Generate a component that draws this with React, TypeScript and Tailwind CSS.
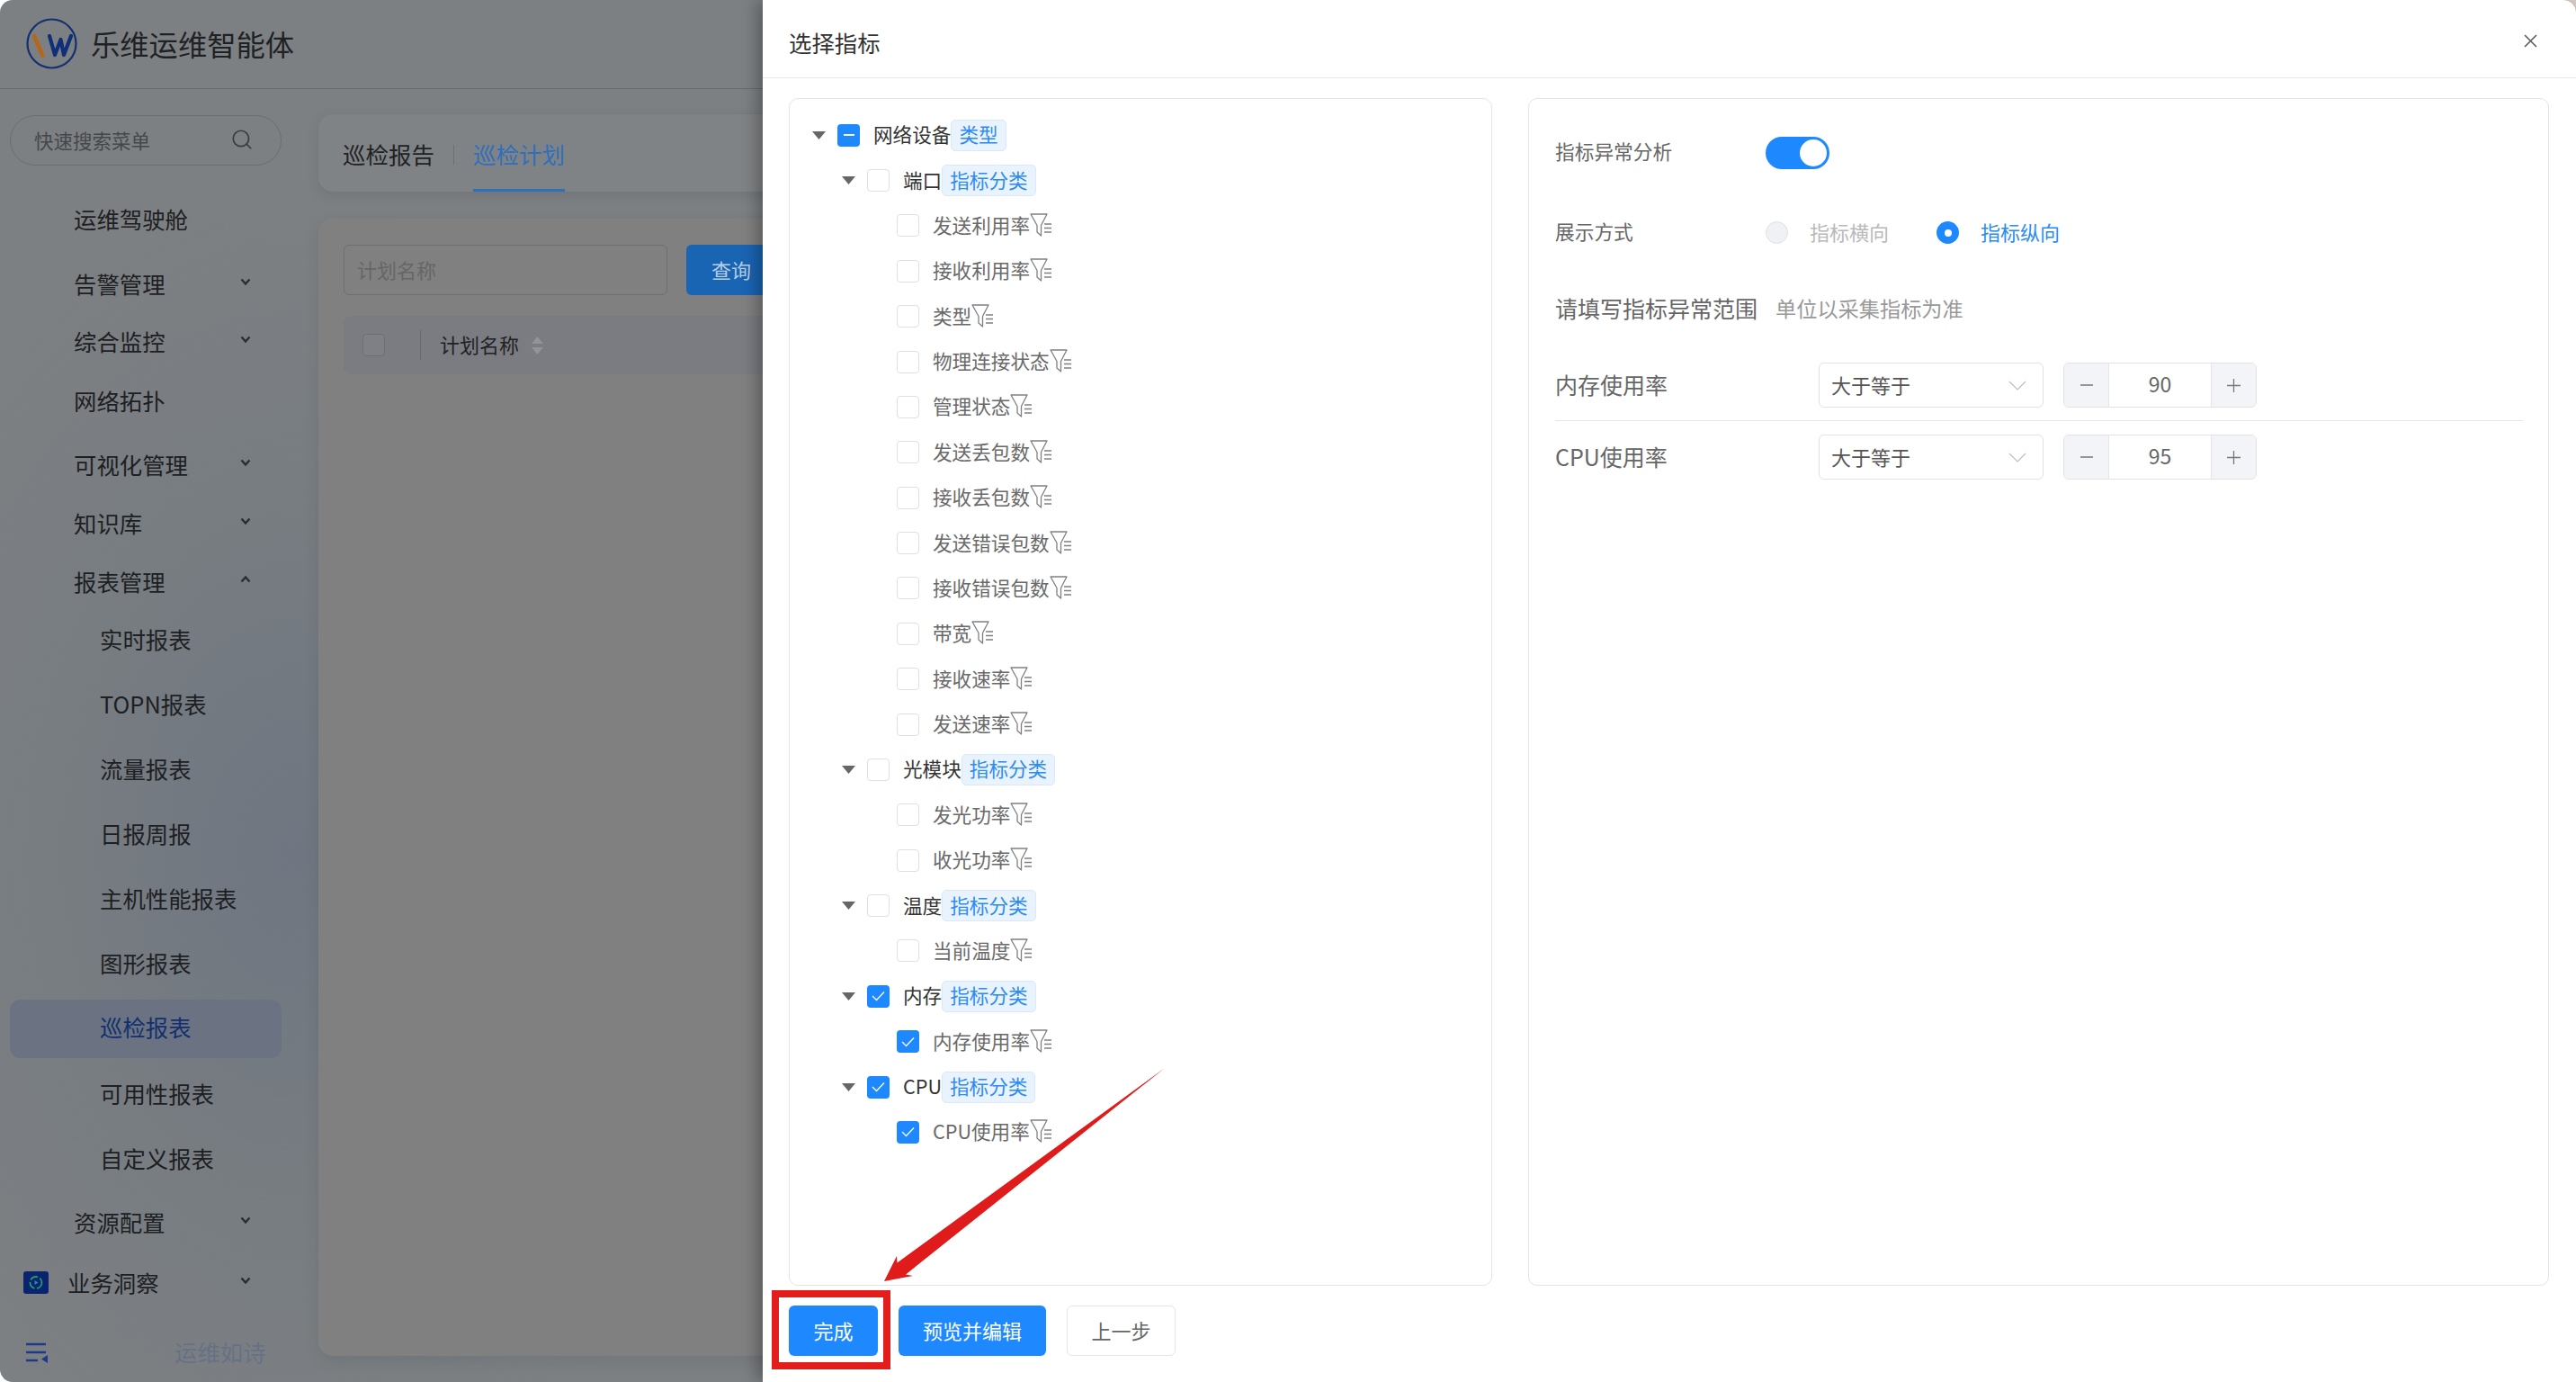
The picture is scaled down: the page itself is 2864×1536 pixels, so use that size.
import React from "react";
import { Search } from "lucide-react";

function Logo() {
  return (
    <svg width="57" height="57" viewBox="0 0 57 57" fill="none">
      <circle cx="28.5" cy="28.5" r="27" stroke="#14306e" strokeWidth="2.2" />
      <path d="M9 20L18.5 42" stroke="#b4661f" strokeWidth="4.6" strokeLinecap="round" />
      <path d="M26 20L32 41L38.5 24L42 41L50 20" stroke="#0f2f78" strokeWidth="4.2" strokeLinecap="round" strokeLinejoin="round" />
    </svg>
  );
}

function Chevron({ up }: { up?: boolean }) {
  return (
    <svg width="14" height="10" viewBox="0 0 14 10" fill="none" className="mb-[6px]">
      <path d={up ? "M2.5 7.5L7 2.5L11.5 7.5" : "M2.5 2.5L7 7.5L11.5 2.5"} stroke="#2a2d30" strokeWidth="2.4" />
    </svg>
  );
}

function TopItem({ label, cls, open, noChevron }: { label: string; cls: string; open?: boolean; noChevron?: boolean }) {
  return (
    <div className={"h-[64px] flex items-center justify-between pl-[71px] pr-[33px] text-[25.4px] text-[#1d2022] " + cls}>
      <span>{label}</span>
      {!noChevron && <Chevron up={open} />}
    </div>
  );
}

function SubItem({ label, active }: { label: string; active?: boolean }) {
  return (
    <div
      className={
        active
          ? "h-[65px] flex items-center pl-[100px] pb-[3px] text-[25.4px] text-[#12306e] bg-[#6b7383] rounded-[12px]"
          : "h-[64px] flex items-center pl-[100px] text-[25.4px] text-[#1d2022]"
      }
    >
      {label}
    </div>
  );
}

function BusinessIcon() {
  return (
    <svg width="28" height="25" viewBox="0 0 28 25" fill="none">
      <rect width="28" height="25" rx="3" fill="#0a2470" />
      <circle cx="14" cy="12.5" r="6.5" stroke="#1f9e6a" strokeWidth="1.8" strokeDasharray="9 2.5" />
      <path d="M12.5 10L16.5 12.5L12.5 15Z" fill="#3a7fb0" />
    </svg>
  );
}

function FoldIcon() {
  return (
    <svg width="24" height="23" viewBox="0 0 24 23" fill="none">
      <path d="M0 2H22M0 11H22M0 20H13" stroke="#1c3a8c" strokeWidth="2.6" />
      <path d="M24 14V23L17 18.5Z" fill="#1c3a8c" />
    </svg>
  );
}

function Funnel() {
  return (
    <svg width="24" height="26" viewBox="0 0 24 26" fill="none" className="shrink-0 mb-[2px]">
      <path d="M1 1H19L12.5 13.5V25L8 21V13.5Z" stroke="#808080" strokeWidth="1.3" strokeLinejoin="round" />
      <path d="M16 12H24M16 16.5H24M16 21H24" stroke="#808080" strokeWidth="1.3" />
    </svg>
  );
}

function Caret() {
  return (
    <svg width="15" height="9" viewBox="0 0 15 9" className="shrink-0">
      <path d="M0 0H15L7.5 9Z" fill="#666666" />
    </svg>
  );
}

function Box({ state, cls = "" }: { state?: "on" | "half"; cls?: string }) {
  if (state === "half") {
    return (
      <span className={"w-[25px] h-[25px] shrink-0 rounded-[4px] bg-[#1e88ff] flex items-center justify-center " + cls}>
        <span className="w-[12px] h-[2px] bg-white" />
      </span>
    );
  }
  if (state === "on") {
    return (
      <span className={"w-[25px] h-[25px] shrink-0 rounded-[4px] bg-[#1e88ff] flex items-center justify-center " + cls}>
        <svg width="15" height="12" viewBox="0 0 15 12" fill="none">
          <path d="M1 6L5.5 10.5L14 1.5" stroke="white" strokeWidth="1.3" />
        </svg>
      </span>
    );
  }
  return <span className={"block w-[25px] h-[25px] shrink-0 rounded-[4px] border border-[#e0e0e0] bg-white " + cls} />;
}

function Tag({ text }: { text: string }) {
  return (
    <span className="h-[35px] px-[8px] pb-[2px] flex items-center rounded-[5px] border border-[#d9e9fb] bg-[#e9f3fe] text-[#2e8bf0]">
      {text}
    </span>
  );
}

function Group({ label, tag, state, level0 }: { label: string; tag: string; state?: "on" | "half"; level0?: boolean }) {
  return (
    <div className={"h-[50.38px] flex items-center text-[#333333] " + (level0 ? "pl-[25px]" : "pl-[58px]")}>
      <Caret />
      <Box state={state} cls="ml-[13px]" />
      <span className="ml-[15px] pb-[2px]">{label}</span>
      <Tag text={tag} />
    </div>
  );
}

function Leaf({ label, on }: { label: string; on?: boolean }) {
  return (
    <div className="h-[50.38px] flex items-center pl-[119px] text-[#696969]">
      <Box state={on ? "on" : undefined} />
      <span className="ml-[15px] pb-[2px]">{label}</span>
      <Funnel />
    </div>
  );
}

function RangeRow({ label, value, cls }: { label: string; value: string; cls: string }) {
  return (
    <div className={"flex items-center " + cls}>
      <span className="w-[293px] pb-[2px] text-[25px] text-[#666666]">{label}</span>
      <div className="w-[250px] h-[50px] border border-[#e2e2e2] rounded-[6px] flex items-center justify-between pl-[13px] pr-[18px] text-[22px] text-[#555555]">
        <span className="pb-[2px]">大于等于</span>
        <svg width="20" height="11" viewBox="0 0 20 11" fill="none">
          <path d="M1 1L10 10L19 1" stroke="#bdbdbd" strokeWidth="1.2" />
        </svg>
      </div>
      <div className="ml-[22px] w-[215px] h-[50px] border border-[#e2e2e2] rounded-[6px] flex overflow-hidden text-[#666666]">
        <span className="w-[50px] bg-[#f3f4f7] border-r border-[#e6e6e6] flex items-center justify-center">
          <svg width="14" height="2" viewBox="0 0 14 2"><path d="M0 1H14" stroke="#777777" strokeWidth="1.4" /></svg>
        </span>
        <span className="flex-1 flex items-center justify-center pb-[2px] text-[23px]">{value}</span>
        <span className="w-[50px] bg-[#f3f4f7] border-l border-[#e6e6e6] flex items-center justify-center">
          <svg width="15" height="15" viewBox="0 0 15 15"><path d="M0 7.5H15M7.5 0V15" stroke="#777777" strokeWidth="1.3" /></svg>
        </span>
      </div>
    </div>
  );
}

export default function App() {
  return (
    <div className="relative w-[2864px] h-[1536px] overflow-hidden bg-[linear-gradient(90deg,#ffffff_50%,#d9cfca_50%)] font-['Noto_Sans_CJK_SC','Noto_Sans',sans-serif] leading-[1.3]">
      {/* page behind the drawer */}
      <div className="h-full rounded-[14px] flex flex-col bg-[radial-gradient(ellipse_520px_760px_at_330px_950px,#6f7681_0%,#787d81_55%,#7d8083_100%)]">
        <header className="h-[99px] shrink-0 border-b border-[#696c6e] flex items-center pl-[29px] gap-[15px] pb-[2px]">
          <Logo />
          <span className="text-[32.3px] text-[#1f2224]">乐维运维智能体</span>
        </header>
        <div className="flex-1 flex">
          <aside className="w-[354px] shrink-0 pl-[11px] pr-[41px] pt-[29px]">
            <div className="h-[56px] rounded-full border border-[#6b6e71] flex items-center justify-between pl-[26px] pr-[30px] text-[21.5px] text-[#45484b]">
              <span>快速搜索菜单</span>
              <Search size={26} strokeWidth={1.6} color="#3a3d40" className="mb-[2px]" />
            </div>
            <TopItem label="运维驾驶舱" cls="mt-[28px]" noChevron />
            <TopItem label="告警管理" cls="mt-[8px]" />
            <TopItem label="综合监控" cls="" />
            <TopItem label="网络拓扑" cls="mt-[2px]" noChevron />
            <TopItem label="可视化管理" cls="mt-[7px]" />
            <TopItem label="知识库" cls="mt-[1px]" />
            <TopItem label="报表管理" cls="mt-[1px]" open />
            <div className="flex flex-col gap-[8px]">
              <SubItem label="实时报表" />
              <SubItem label="TOPN报表" />
              <SubItem label="流量报表" />
              <SubItem label="日报周报" />
              <SubItem label="主机性能报表" />
              <SubItem label="图形报表" />
              <SubItem label="巡检报表" active />
              <SubItem label="可用性报表" />
              <SubItem label="自定义报表" />
            </div>
            <TopItem label="资源配置" cls="mt-[7px]" />
            <div className="mt-[3px] h-[64px] flex items-center justify-between pl-[15px] pr-[33px] text-[25.4px] text-[#1d2022]">
              <span className="flex items-center gap-[21px]">
                <BusinessIcon />
                <span>业务洞察</span>
              </span>
              <Chevron />
            </div>
            <div className="mt-[13px] h-[64px] flex items-center pl-[18px] text-[25.4px] text-[#667186]">
              <FoldIcon />
              <span className="ml-[141px] whitespace-nowrap">运维如诗</span>
            </div>
          </aside>
          <main className="flex-1 pt-[28px] pr-[30px]">
            <div className="h-[86px] rounded-[16px] bg-[#808385] shadow-[0_4px_14px_rgba(40,50,60,0.14)] flex items-stretch pl-[27px] text-[25.5px]">
              <span className="flex items-center pt-[2px] text-[#1f2224]">巡检报告</span>
              <span className="mx-[21px] self-center w-px h-[22px] bg-[#6d6f71] mt-[4px]" />
              <span className="flex items-center pt-[5px] border-b-[3px] border-[#2f6fbd] text-[#2f6fbd]">巡检计划</span>
            </div>
            <div className="mt-[30px] h-[1264px] rounded-[16px] bg-[#808080] shadow-[0_6px_16px_rgba(40,50,60,0.12)] px-[28px] pt-[29px]">
              <div className="flex gap-[21px]">
                <div className="w-[360px] h-[56px] rounded-[6px] border border-[#6e6f70] flex items-center pl-[14px] pb-[2px] text-[22px] text-[#666666]">
                  计划名称
                </div>
                <div className="w-[110px] h-[56px] rounded-[6px] bg-[#1a64b4] flex items-center pl-[28px] pb-[2px] text-[22px] text-[#b6cfe8]">
                  查询
                </div>
              </div>
              <div className="mt-[23px] h-[65px] rounded-[8px] bg-[#7a7c82] flex items-center pl-[21px] text-[22px] text-[#1f2224]">
                <span className="w-[25px] h-[25px] rounded-[4px] border border-[#6d6f74] bg-[#7e8085]" />
                <span className="ml-[39px] w-px h-[33px] bg-[#66686c]" />
                <span className="ml-[21px] pb-[2px]">计划名称</span>
                <svg width="13" height="20" viewBox="0 0 13 20" className="ml-[14px]">
                  <path d="M6.5 0L13 8H0Z" fill="#939497" />
                  <path d="M6.5 20L13 12H0Z" fill="#939497" />
                </svg>
              </div>
            </div>
          </main>
        </div>
      </div>

      {/* drawer */}
      <div className="absolute top-0 right-0 bottom-0 w-[2016px] bg-white rounded-tr-[14px] shadow-[-6px_0_18px_rgba(0,0,0,0.3)] flex flex-col">
        <div className="h-[87px] shrink-0 border-b border-[#e8e8e8] flex items-center justify-between pl-[29px] pr-[43px] pt-[9px] text-[25.4px] text-[#333333]">
          <span>选择指标</span>
          <svg width="15" height="15" viewBox="0 0 15 15" fill="none" className="mb-[4px]">
            <path d="M1 1L14 14M14 1L1 14" stroke="#5c5c5c" strokeWidth="1.6" />
          </svg>
        </div>
        <div className="mt-[22px] pl-[29px] flex gap-[40px] h-[1320px] shrink-0">
          <div className="w-[782px] border border-[#e4e4e4] rounded-[10px] pt-[15px] text-[21.6px]">
            <Group label="网络设备" tag="类型" state="half" level0 />
            <Group label="端口" tag="指标分类" />
            <Leaf label="发送利用率" />
            <Leaf label="接收利用率" />
            <Leaf label="类型" />
            <Leaf label="物理连接状态" />
            <Leaf label="管理状态" />
            <Leaf label="发送丢包数" />
            <Leaf label="接收丢包数" />
            <Leaf label="发送错误包数" />
            <Leaf label="接收错误包数" />
            <Leaf label="带宽" />
            <Leaf label="接收速率" />
            <Leaf label="发送速率" />
            <Group label="光模块" tag="指标分类" />
            <Leaf label="发光功率" />
            <Leaf label="收光功率" />
            <Group label="温度" tag="指标分类" />
            <Leaf label="当前温度" />
            <Group label="内存" tag="指标分类" state="on" />
            <Leaf label="内存使用率" on />
            <Group label="CPU" tag="指标分类" state="on" />
            <Leaf label="CPU使用率" on />
          </div>
          <div className="w-[1135px] border border-[#e4e4e4] rounded-[10px] pl-[29px] pr-[28px] pt-[42px]">
            <div className="flex items-center">
              <span className="w-[234px] pb-[3px] text-[21.7px] text-[#666666]">指标异常分析</span>
              <span className="w-[71px] h-[36px] rounded-full bg-[#1e88ff] flex items-center justify-end pr-[3px]">
                <span className="w-[30px] h-[30px] rounded-full bg-white" />
              </span>
            </div>
            <div className="mt-[58px] flex items-center h-[25px]">
              <span className="w-[234px] pb-[2px] text-[21.7px] text-[#666666]">展示方式</span>
              <span className="w-[25px] h-[25px] rounded-full bg-[#f0f1f5] border border-[#e0e1e5]" />
              <span className="ml-[24px] pb-[2px] text-[22px] text-[#b9b9b9]">指标横向</span>
              <span className="ml-[53px] w-[25px] h-[25px] rounded-full bg-[#1e88ff] flex items-center justify-center">
                <span className="w-[8px] h-[8px] rounded-full bg-white" />
              </span>
              <span className="ml-[24px] pb-[2px] text-[22px] text-[#2a8bf2]">指标纵向</span>
            </div>
            <div className="mt-[54px] h-[36px] flex items-center">
              <span className="pb-[2px] text-[25px] text-[#666666]">请填写指标异常范围</span>
              <span className="ml-[20px] pb-[2px] text-[23.2px] text-[#999999]">单位以采集指标为准</span>
            </div>
            <RangeRow label="内存使用率" value="90" cls="mt-[42px] pb-[14px] border-b border-[#e6e6e6]" />
            <RangeRow label="CPU使用率" value="95" cls="mt-[15px]" />
          </div>
        </div>
        <div className="mt-[22px] pl-[29px] flex gap-[23px] text-[22px]">
          <button className="w-[99px] h-[56px] pb-[2px] rounded-[6px] bg-[#1e88ff] text-white">完成</button>
          <button className="w-[164px] h-[56px] pb-[2px] rounded-[6px] bg-[#1e88ff] text-white">预览并编辑</button>
          <button className="w-[121px] h-[56px] pb-[2px] rounded-[6px] border border-[#e5e5e5] bg-white text-[#666666]">上一步</button>
        </div>
      </div>

      {/* annotations */}
      <div className="absolute left-[858px] top-[1434px] w-[132px] h-[88px] border-[8px] border-[#e31c1c]" />
      <svg className="absolute left-[970px] top-[1180px]" width="340" height="260" viewBox="970 1180 340 260">
        <polygon points="983,1424 997,1396 997.5,1403.5 1295,1187 1007,1416.5 1015,1418" fill="#e01b1b" />
      </svg>
    </div>
  );
}
